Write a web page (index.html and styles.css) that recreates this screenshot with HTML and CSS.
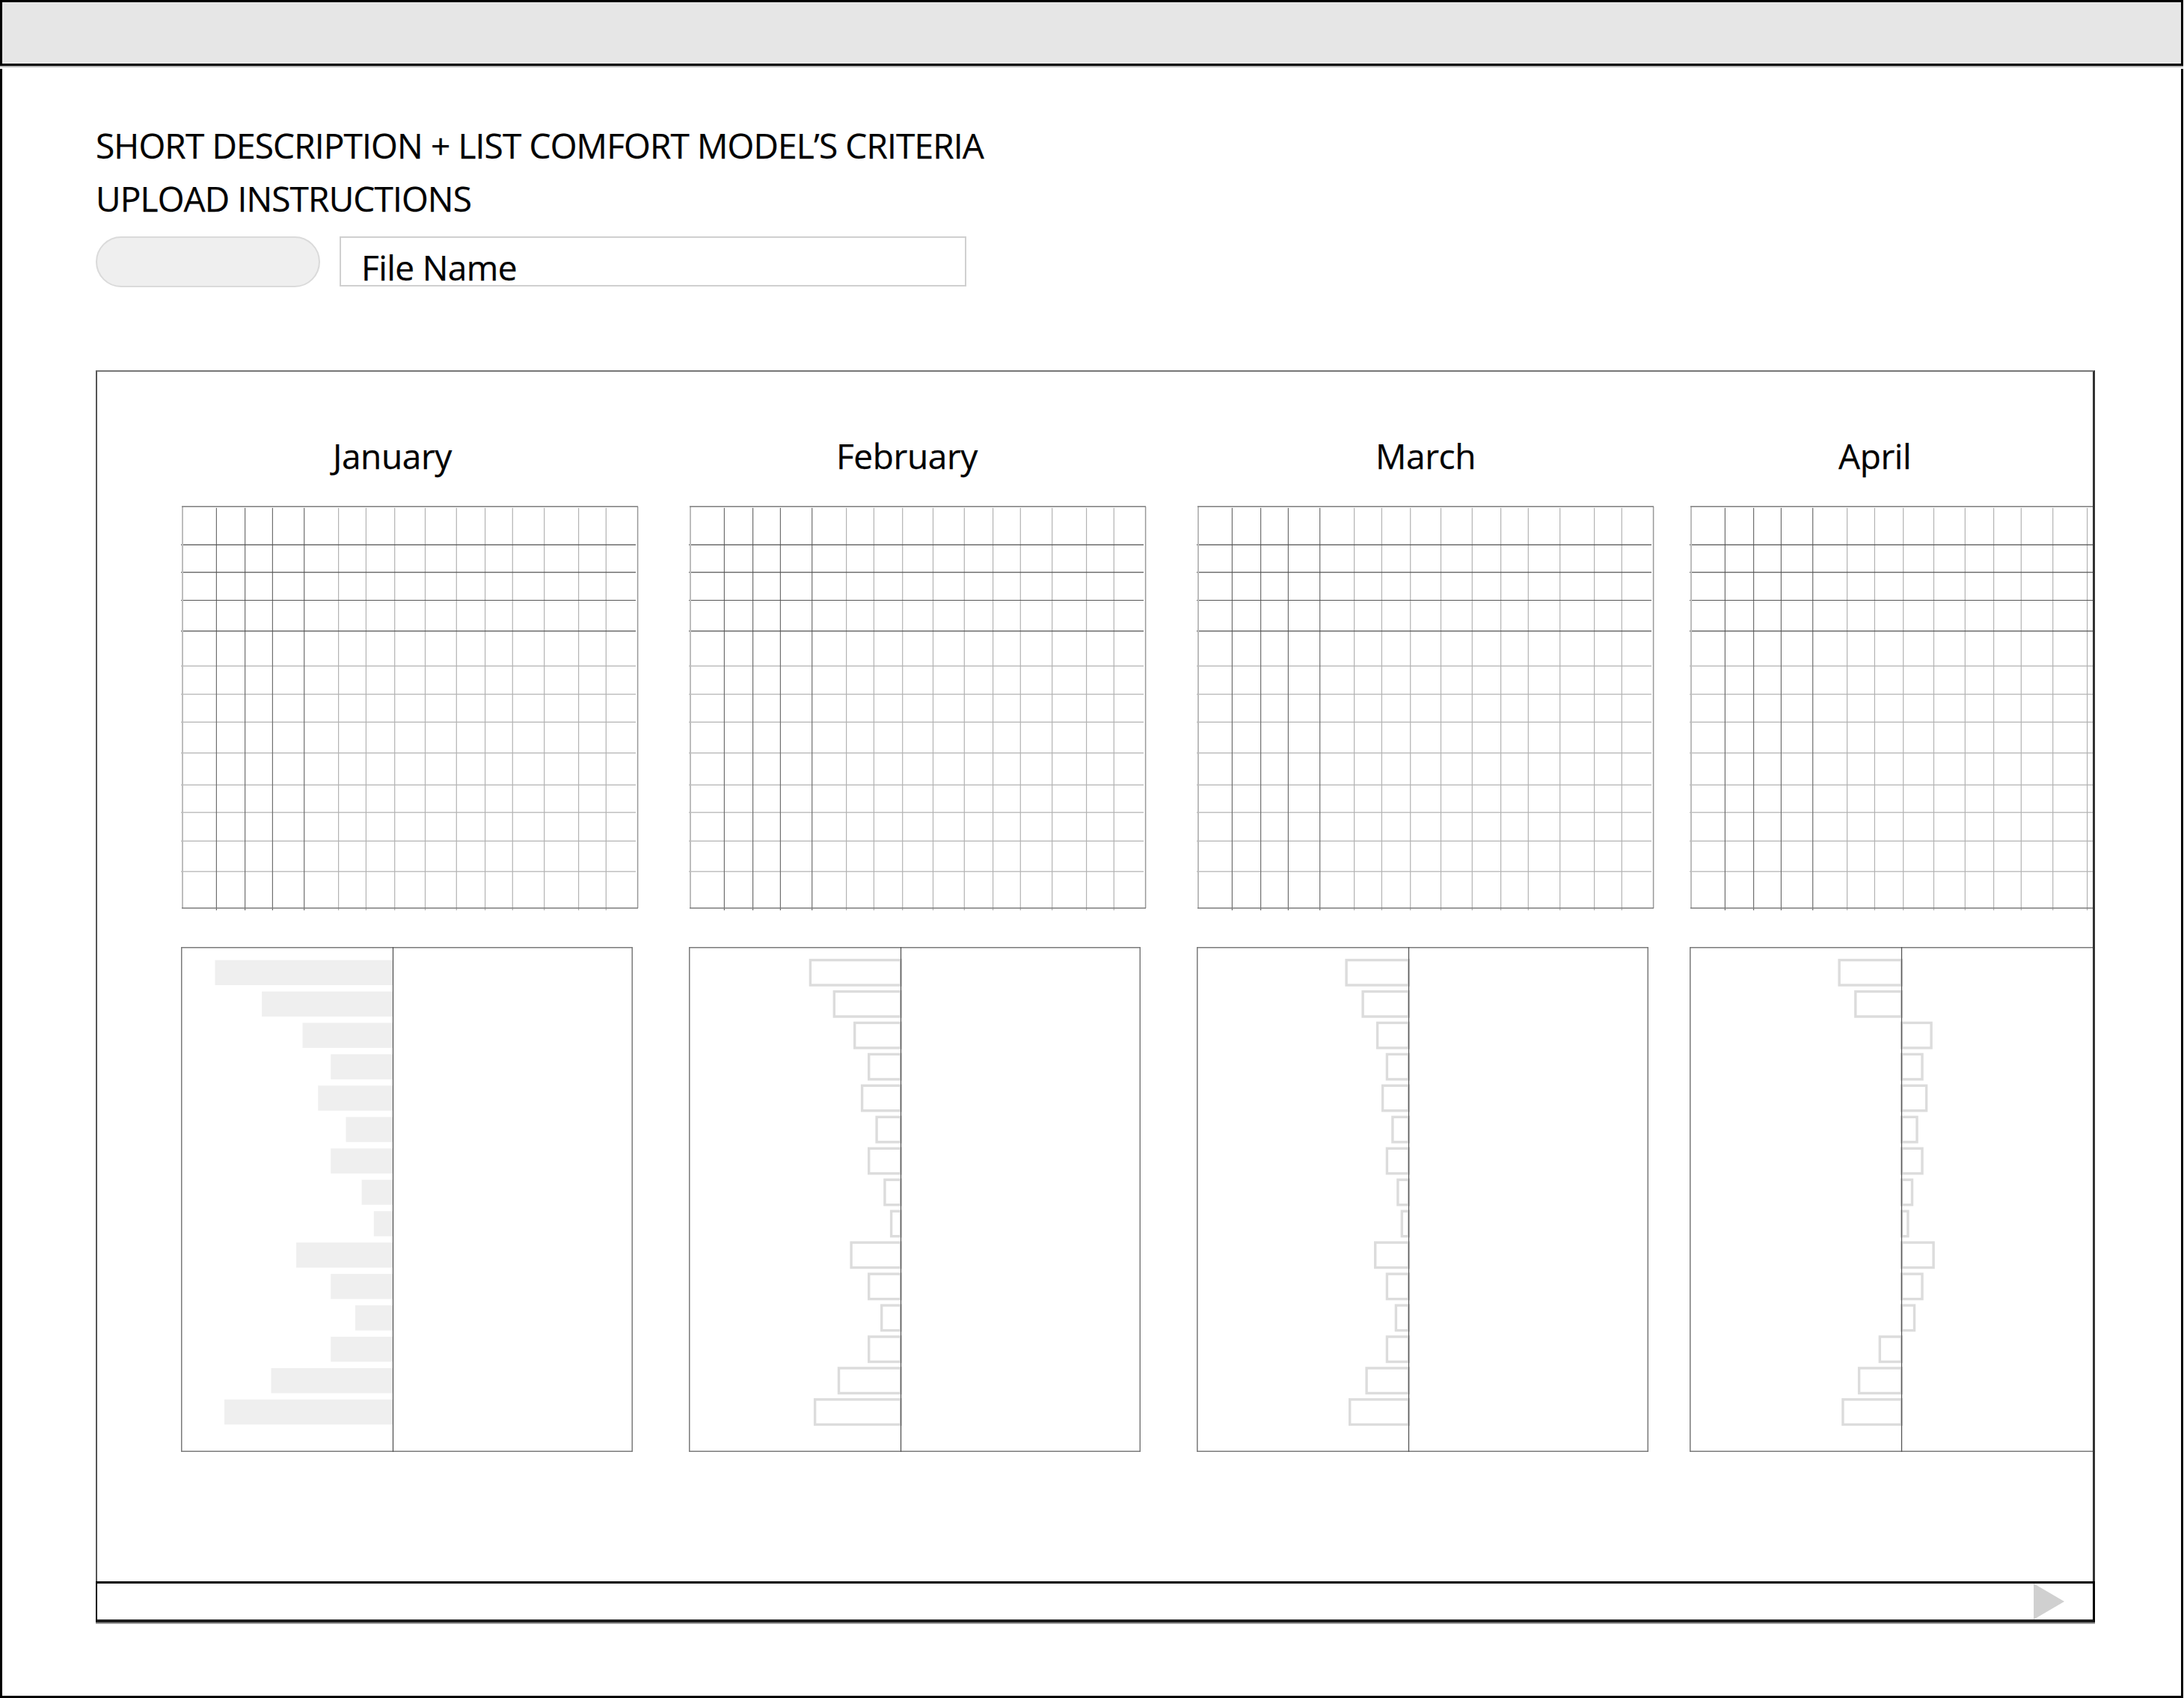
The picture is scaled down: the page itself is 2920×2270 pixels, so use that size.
FILE: index.html
```html
<!DOCTYPE html>
<html lang="en">
<head>
<meta charset="utf-8">
<title>Comfort model upload</title>
<link rel="stylesheet" href="styles.css">
</head>
<body>
<svg class="defs" width="0" height="0" aria-hidden="true">
  <symbol id="grid" viewBox="0 0 613 543">
    <path class="g-light" d="M210.6 3V541M247.4 3V541M285.7 3V541M326.5 3V541M368.3 3V541M406.6 3V541M443.3 3V541M485.7 3V541M531.6 3V541M568.3 3V541"/>
    <path class="g-light" d="M0 214.3H608M0 252.1H608M0 289.4H608M0 330.6H608M0 373.3H608M0 410.1H608M0 448.4H608M0 489.1H608"/>
    <path class="g-darkv" d="M47.4 3V541M85.6 3V541M122.4 3V541M164.7 3V541"/>
    <path class="g-darkh" d="M0 52.4H608M0 89.2H608M0 126.5H608M0 167.7H608"/>
    <path class="g-left" d="M2 1.3V538.1"/>
    <path class="g-right" d="M610.6 1.3V538.1"/>
    <path class="g-edge" d="M1 1.3H611M1 538.1H611"/>
  </symbol>
</svg>

<div class="header"></div>

<div class="page">
  <div class="intro">
    <p class="line">SHORT DESCRIPTION + LIST COMFORT MODEL’S CRITERIA</p>
    <p class="line">UPLOAD INSTRUCTIONS</p>
    <div class="upload">
      <div class="pill"></div>
      <div class="filebox">File Name</div>
    </div>
  </div>

  <div class="panel">
    <div class="months">

      <div class="month m-jan">
        <div class="mtitle">January</div>
        <svg class="grid" width="613" height="543" viewBox="0 0 613 543"><use href="#grid"/></svg>
        <svg class="bars" width="604" height="675" viewBox="0 0 604 675">
          <rect class="box" x="0.75" y="0.75" width="602.5" height="673.5"/>
          <g class="fill">
            <rect x="45.5" y="17.5" width="238" height="33.5"/>
            <rect x="108.1" y="59.5" width="175.4" height="33.5"/>
            <rect x="162.5" y="101.4" width="121" height="33.5"/>
            <rect x="200.2" y="143.4" width="83.3" height="33.5"/>
            <rect x="183.2" y="185.3" width="100.3" height="33.5"/>
            <rect x="220.5" y="227.3" width="63" height="33.5"/>
            <rect x="200.2" y="269.3" width="83.3" height="33.5"/>
            <rect x="241.6" y="311.2" width="41.9" height="33.5"/>
            <rect x="257.8" y="353.2" width="25.7" height="33.5"/>
            <rect x="154.1" y="395.1" width="129.4" height="33.5"/>
            <rect x="200.2" y="437.1" width="83.3" height="33.5"/>
            <rect x="232.9" y="479.1" width="50.6" height="33.5"/>
            <rect x="200.2" y="521" width="83.3" height="33.5"/>
            <rect x="120.5" y="563" width="163" height="33.5"/>
            <rect x="58" y="604.9" width="225.5" height="33.5"/>
          </g>
          <line class="axis" x1="283.5" y1="0" x2="283.5" y2="675"/>
        </svg>
      </div>

      <div class="month m-feb">
        <div class="mtitle">February</div>
        <svg class="grid" width="613" height="543" viewBox="0 0 613 543"><use href="#grid"/></svg>
        <svg class="bars" width="604" height="675" viewBox="0 0 604 675">
          <rect class="box" x="0.75" y="0.75" width="602.5" height="673.5"/>
          <g class="outline">
            <rect x="162.4" y="17.5" width="121.1" height="33.5"/>
            <rect x="194.3" y="59.5" width="89.2" height="33.5"/>
            <rect x="221.7" y="101.4" width="61.8" height="33.5"/>
            <rect x="240.7" y="143.4" width="42.8" height="33.5"/>
            <rect x="231.6" y="185.3" width="51.9" height="33.5"/>
            <rect x="251.1" y="227.3" width="32.4" height="33.5"/>
            <rect x="240.7" y="269.3" width="42.8" height="33.5"/>
            <rect x="261.9" y="311.2" width="21.6" height="33.5"/>
            <rect x="270.6" y="353.2" width="12.9" height="33.5"/>
            <rect x="217.1" y="395.1" width="66.4" height="33.5"/>
            <rect x="240.7" y="437.1" width="42.8" height="33.5"/>
            <rect x="257.7" y="479.1" width="25.8" height="33.5"/>
            <rect x="240.7" y="521" width="42.8" height="33.5"/>
            <rect x="200.5" y="563" width="83" height="33.5"/>
            <rect x="168.6" y="604.9" width="114.9" height="33.5"/>
          </g>
          <line class="axis" x1="283.5" y1="0" x2="283.5" y2="675"/>
        </svg>
      </div>

      <div class="month m-mar">
        <div class="mtitle">March</div>
        <svg class="grid" width="613" height="543" viewBox="0 0 613 543"><use href="#grid"/></svg>
        <svg class="bars" width="604" height="675" viewBox="0 0 604 675">
          <rect class="box" x="0.75" y="0.75" width="602.5" height="673.5"/>
          <g class="outline">
            <rect x="200.1" y="17.5" width="83.4" height="33.5"/>
            <rect x="222.1" y="59.5" width="61.4" height="33.5"/>
            <rect x="241.6" y="101.4" width="41.9" height="33.5"/>
            <rect x="254.4" y="143.4" width="29.1" height="33.5"/>
            <rect x="248.6" y="185.3" width="34.9" height="33.5"/>
            <rect x="261.9" y="227.3" width="21.6" height="33.5"/>
            <rect x="254.4" y="269.3" width="29.1" height="33.5"/>
            <rect x="268.9" y="311.2" width="14.6" height="33.5"/>
            <rect x="274.3" y="353.2" width="9.2" height="33.5"/>
            <rect x="238.7" y="395.1" width="44.8" height="33.5"/>
            <rect x="254.4" y="437.1" width="29.1" height="33.5"/>
            <rect x="266.4" y="479.1" width="17.1" height="33.5"/>
            <rect x="254.4" y="521" width="29.1" height="33.5"/>
            <rect x="227.1" y="563" width="56.4" height="33.5"/>
            <rect x="204.7" y="604.9" width="78.8" height="33.5"/>
          </g>
          <line class="axis" x1="283.5" y1="0" x2="283.5" y2="675"/>
        </svg>
      </div>

      <div class="month m-apr">
        <div class="mtitle">April</div>
        <svg class="grid" width="613" height="543" viewBox="0 0 613 543"><use href="#grid"/></svg>
        <svg class="bars" width="604" height="675" viewBox="0 0 604 675">
          <rect class="box" x="0.75" y="0.75" width="602.5" height="673.5"/>
          <g class="outline">
            <rect x="200.1" y="17.5" width="83.4" height="33.5"/>
            <rect x="221.8" y="59.5" width="61.7" height="33.5"/>
            <rect x="283.5" y="101.4" width="39.6" height="33.5"/>
            <rect x="283.5" y="143.4" width="27.5" height="33.5"/>
            <rect x="283.5" y="185.3" width="33.1" height="33.5"/>
            <rect x="283.5" y="227.3" width="20.5" height="33.5"/>
            <rect x="283.5" y="269.3" width="27.5" height="33.5"/>
            <rect x="283.5" y="311.2" width="14" height="33.5"/>
            <rect x="283.5" y="353.2" width="8.4" height="33.5"/>
            <rect x="283.5" y="395.1" width="42.6" height="33.5"/>
            <rect x="283.5" y="437.1" width="27.5" height="33.5"/>
            <rect x="283.5" y="479.1" width="17" height="33.5"/>
            <rect x="254.3" y="521" width="29.2" height="33.5"/>
            <rect x="226.6" y="563" width="56.9" height="33.5"/>
            <rect x="204.9" y="604.9" width="78.6" height="33.5"/>
          </g>
          <line class="axis" x1="283.5" y1="0" x2="283.5" y2="675"/>
        </svg>
      </div>

    </div>
    <div class="strip"><span class="tri"></span></div>
  </div>
</div>
</body>
</html>
```

FILE: styles.css
```css
html, body {
  margin: 0;
  padding: 0;
  background: #fff;
}

body {
  width: 2920px;
  height: 2270px;
  overflow: hidden;
  font-family: "Open Sans", "Noto Sans", sans-serif;
  color: #000;
}

.defs {
  display: block;
  width: 0;
  height: 0;
  overflow: hidden;
}

.header {
  box-sizing: border-box;
  width: 2919px;
  height: 88px;
  background: #e6e6e6;
  border: 3px solid #000;
  box-shadow: 0 2px 0 #b8b8b8;
}

.page {
  box-sizing: border-box;
  width: 2919px;
  height: 2178px;
  margin-top: 4px;
  border: 3px solid #000;
  border-top: none;
  padding: 67px 0 0 125px;
}

.intro .line {
  margin: 0;
  font-size: 46px;
  line-height: 71px;
  white-space: nowrap;
  letter-spacing: -0.85px;
  -webkit-text-stroke: 0.25px #000;
}

.upload {
  display: flex;
  align-items: flex-start;
  gap: 26px;
  margin-top: 15px;
}

.pill {
  box-sizing: border-box;
  width: 300px;
  height: 68px;
  border-radius: 34px;
  background: #efefef;
  border: 2px solid #dadada;
}

.filebox {
  box-sizing: border-box;
  width: 838px;
  height: 67px;
  border: 2px solid #d0d0d0;
  padding: 8px 0 0 27px;
  font-size: 46px;
  line-height: 62px;
  white-space: nowrap;
  letter-spacing: -0.6px;
  -webkit-text-stroke: 0.25px #000;
}

.panel {
  width: 2673px;
  margin-top: 111px;
}

.months {
  box-sizing: border-box;
  height: 1619px;
  border-top: 2px solid #777;
  border-left: 2px solid #555;
  border-right: 3px solid #333;
  padding: 81px 0 0 112px;
  display: flex;
  gap: 66px;
  overflow: hidden;
}

.month {
  flex: 0 0 613px;
  display: flex;
  flex-direction: column;
}

.m-apr {
  margin-left: -20px;
}

.mtitle {
  font-size: 46px;
  line-height: 62px;
  height: 62px;
  white-space: nowrap;
  letter-spacing: -0.4px;
  -webkit-text-stroke: 0.25px #000;
}

.m-jan .mtitle { padding-left: 203px; }
.m-feb .mtitle { padding-left: 197px; }
.m-mar .mtitle { padding-left: 239px; }
.m-apr .mtitle { padding-left: 199px; }

.grid {
  display: block;
  margin-top: 36px;
  flex: none;
}

.bars {
  display: block;
  margin-top: 47px;
  flex: none;
}

.g-light { fill: none; stroke: #b3b3b3; stroke-width: 1.2; }
.g-darkv { fill: none; stroke: #707070; stroke-width: 1.2; }
.g-darkh { fill: none; stroke: #555; stroke-width: 1.2; }
.g-left { fill: none; stroke: #bdbdbd; stroke-width: 2; }
.g-right { fill: none; stroke: #999; stroke-width: 1.5; }
.g-edge { fill: none; stroke: #7c7c7c; stroke-width: 1.5; }

.box { fill: #fff; stroke: #7a7a7a; stroke-width: 1.5; }
.fill rect { fill: #efefef; }
.outline rect { fill: none; stroke: #dcdcdc; stroke-width: 3.4; }
.axis { stroke: #555; stroke-width: 1.3; }

.strip {
  box-sizing: border-box;
  height: 55px;
  border-top: 3px solid #000;
  border-bottom: 4px solid #1e1e1e;
  border-left: 2px solid #000;
  border-right: 3px solid #000;
  box-shadow: 0 2px 0 #9a9a9a;
  display: flex;
  justify-content: flex-end;
  align-items: center;
  padding-right: 38px;
}

.tri {
  display: block;
  width: 0;
  height: 0;
  border-left: 41px solid #d0d0d0;
  border-top: 24px solid transparent;
  border-bottom: 24px solid transparent;
}
```
